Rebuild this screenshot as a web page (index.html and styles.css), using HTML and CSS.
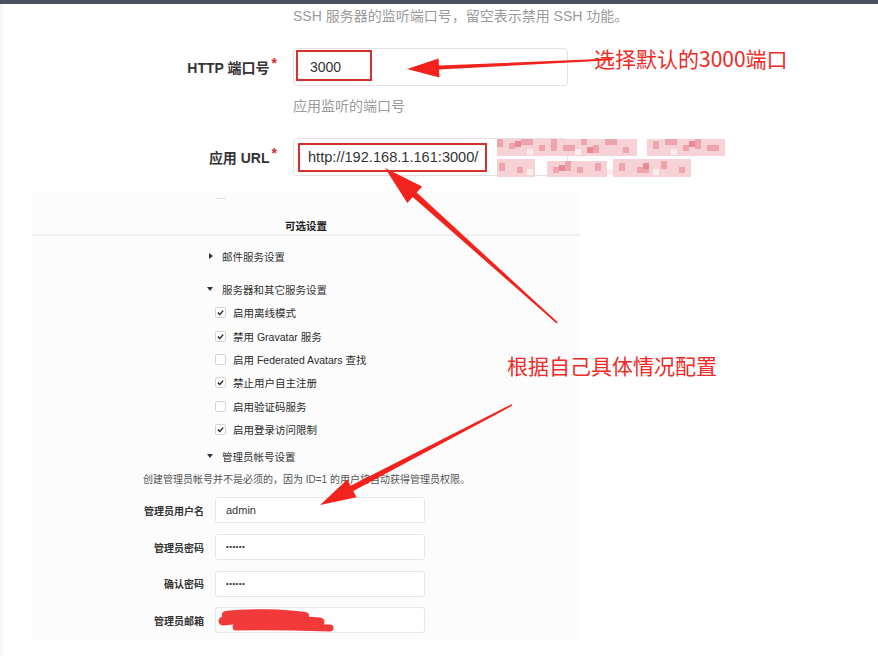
FILE: index.html
```html
<!DOCTYPE html>
<html lang="zh-CN">
<head>
<meta charset="utf-8">
<title>Gitea 安装</title>
<link rel="stylesheet" href="styles.css">
</head>
<body>
<div class="topbar"></div>
<main class="page">
  <section class="form">
    <p class="hint hint-top">SSH 服务器的监听端口号，留空表示禁用 SSH 功能。</p>
    <div class="row row-http">
      <label class="lbl">HTTP 端口号<span class="req">*</span></label>
      <div class="field">
        <div class="input">3000</div>
        <span class="mark mark-port"></span>
      </div>
    </div>
    <p class="hint hint-mid">应用监听的端口号</p>
    <div class="row row-url">
      <label class="lbl">应用 URL<span class="req">*</span></label>
      <div class="field">
        <div class="input input-url">http://192.168.1.161:3000/</div>
        <span class="mark mark-url"></span>
      </div>
    </div>
  </section>

  <section class="panel">
    <div class="dash"></div>
    <h3 class="panel-title">可选设置</h3>
    <div class="group">
      <div class="toggle"><span class="tri tri-right"></span>邮件服务设置</div>
      <div class="toggle toggle-server"><span class="tri tri-down"></span>服务器和其它服务设置</div>
      <ul class="checks">
        <li><span class="cb on"><svg viewBox="0 0 11 11"><polyline points="2.3,5.6 4.5,7.8 8.8,3.2"/></svg></span>启用离线模式</li>
        <li><span class="cb on"><svg viewBox="0 0 11 11"><polyline points="2.3,5.6 4.5,7.8 8.8,3.2"/></svg></span>禁用 Gravatar 服务</li>
        <li><span class="cb"></span>启用 Federated Avatars 查找</li>
        <li><span class="cb on"><svg viewBox="0 0 11 11"><polyline points="2.3,5.6 4.5,7.8 8.8,3.2"/></svg></span>禁止用户自主注册</li>
        <li><span class="cb"></span>启用验证码服务</li>
        <li><span class="cb on"><svg viewBox="0 0 11 11"><polyline points="2.3,5.6 4.5,7.8 8.8,3.2"/></svg></span>启用登录访问限制</li>
      </ul>
      <div class="toggle toggle-admin"><span class="tri tri-down"></span>管理员帐号设置</div>
    </div>
    <p class="desc">创建管理员帐号并不是必须的，因为 ID=1 的用户将自动获得管理员权限。</p>
    <div class="admin">
      <label class="alabel">管理员用户名</label><div class="ainput">admin</div>
      <label class="alabel">管理员密码</label><div class="ainput dots">••••••</div>
      <label class="alabel">确认密码</label><div class="ainput dots">••••••</div>
      <label class="alabel">管理员邮箱</label><div class="ainput"></div>
    </div>
  </section>
</main>

<svg class="blur" viewBox="0 0 228 42" width="228" height="42">
  <g fill="#f6d2d6">
    <rect x="0" y="2" width="140" height="17"/>
    <rect x="150" y="2" width="78" height="17"/>
    <rect x="0" y="22" width="38" height="18"/>
    <rect x="50" y="24" width="60" height="16"/>
    <rect x="116" y="22" width="78" height="18"/>
  </g>
  <g fill="#eea4ad">
    <rect x="0" y="2" width="6" height="8"/><rect x="12" y="6" width="6" height="6"/>
    <rect x="24" y="2" width="12" height="6"/><rect x="42" y="8" width="6" height="6"/>
    <rect x="54" y="2" width="6" height="12"/><rect x="66" y="8" width="12" height="6"/>
    <rect x="84" y="2" width="6" height="6"/><rect x="96" y="8" width="6" height="8"/>
    <rect x="108" y="2" width="12" height="6"/><rect x="126" y="10" width="6" height="6"/>
    <rect x="156" y="4" width="6" height="8"/><rect x="168" y="2" width="12" height="6"/>
    <rect x="186" y="8" width="6" height="6"/><rect x="198" y="2" width="6" height="10"/>
    <rect x="210" y="8" width="12" height="6"/>
    <rect x="2" y="26" width="6" height="8"/><rect x="20" y="30" width="6" height="6"/>
    <rect x="56" y="30" width="6" height="6"/><rect x="68" y="24" width="6" height="10"/>
    <rect x="80" y="30" width="6" height="6"/><rect x="98" y="26" width="6" height="8"/>
    <rect x="122" y="26" width="6" height="8"/><rect x="140" y="30" width="12" height="6"/>
    <rect x="164" y="24" width="6" height="8"/><rect x="182" y="30" width="6" height="6"/>
  </g>
  <g fill="#e88a95">
    <rect x="18" y="4" width="6" height="6"/><rect x="90" y="10" width="6" height="6"/>
    <rect x="192" y="4" width="6" height="6"/><rect x="62" y="28" width="6" height="6"/>
    <rect x="146" y="26" width="6" height="6"/>
  </g>
  <g fill="#fbecee">
    <rect x="30" y="12" width="6" height="6"/><rect x="78" y="12" width="6" height="6"/>
    <rect x="174" y="12" width="6" height="6"/><rect x="30" y="32" width="6" height="6"/>
    <rect x="110" y="32" width="6" height="6"/><rect x="156" y="32" width="6" height="6"/>
  </g>
</svg>

<svg class="annot" viewBox="0 0 878 656" width="878" height="656">
  <g fill="#f2231d">
    <polygon points="407,69 438.6,58.5 438.9,65.5 612,58.6 612,60.2 439.1,69.5 439.4,77.5"/>
    <polygon points="385,168 422.1,186.6 416.7,192.6 557.8,322.2 556.6,323.4 412.7,197.0 407.3,203.0"/>
    <polygon points="320,505 347.3,479.5 350.5,485.7 511.7,404.2 512.4,405.6 353.3,491.1 356.5,497.3"/>
  </g>
  <g fill="none" stroke="#f23a3a" stroke-linecap="round">
    <path d="M226,615 C250,612 285,613 305,616" stroke-width="8"/>
    <path d="M223,621 C255,618 290,620 320,622" stroke-width="9"/>
    <path d="M236,627 C265,626 300,627 330,628" stroke-width="7"/>
  </g>
</svg>

<p class="note note-port">选择默认的3000端口</p>
<p class="note note-cfg">根据自己具体情况配置</p>
</body>
</html>
```

FILE: styles.css
```css
html, body {
  margin: 0;
  padding: 0;
}
body {
  position: relative;
  width: 878px;
  height: 656px;
  overflow: hidden;
  background: #ffffff;
  color: #333333;
  font-family: "Liberation Sans", "Noto Sans CJK SC", sans-serif;
  box-shadow: inset 3px 0 0 #f5f5f5;
}
.topbar {
  height: 4px;
  background: #4a525e;
}
.page {
  display: flex;
  flex-direction: column;
}

/* ---- top form ---- */
.form {
  display: flex;
  flex-direction: column;
}
.hint {
  margin: 0 0 0 293px;
  font-size: 14px;
  line-height: 20px;
  color: #9a9a9a;
}
.hint-top { margin-top: 2px; }
.hint-mid { margin-top: 10px; }
.row {
  display: flex;
  align-items: center;
}
.row-http { margin-top: 22px; }
.row-url { margin-top: 22px; }
.lbl {
  width: 277px;
  margin-right: 16px;
  text-align: right;
  font-size: 14px;
  font-weight: bold;
  color: #333;
}
.req {
  color: #db2828;
  margin-left: 2px;
  position: relative;
  top: -5px;
  font-weight: bold;
}
.field {
  position: relative;
}
.input {
  box-sizing: border-box;
  width: 275px;
  height: 38px;
  border: 1px solid #e2e2e2;
  border-radius: 4px;
  padding-left: 16px;
  line-height: 36px;
  font-size: 14px;
  color: #333;
  background: #fff;
}
.input-url {
  padding-left: 14px;
  font-size: 14.6px;
}
.mark {
  position: absolute;
  box-sizing: border-box;
  border: 2px solid #d7302e;
}
.mark-port {
  left: 3px;
  top: 2px;
  width: 76px;
  height: 31px;
}
.mark-url {
  left: 5px;
  top: 5px;
  width: 189px;
  height: 29px;
}

/* ---- optional settings panel ---- */
.panel {
  margin-top: 16px;
  margin-left: 32px;
  width: 548px;
  height: 448px;
  background: #fcfcfc;
  display: flex;
  flex-direction: column;
}
.dash {
  margin: 6px 0 0 184px;
  width: 10px;
  height: 1px;
  background: #e2e2e2;
}
.panel-title {
  margin: 19px 0 0;
  height: 16px;
  line-height: 16px;
  text-align: center;
  font-size: 10.5px;
  font-weight: bold;
  color: #222;
  border-bottom: 2px solid #efefef;
}
.group {
  padding-left: 177px;
  display: flex;
  flex-direction: column;
}
.toggle {
  display: flex;
  align-items: center;
  height: 16px;
  font-size: 10.5px;
  color: #333;
  margin-top: 12px;
}
.toggle-server { margin-top: 17px; }
.toggle-admin { margin-top: 7px; }
.tri {
  width: 0;
  height: 0;
}
.tri-right {
  border-top: 3px solid transparent;
  border-bottom: 3px solid transparent;
  border-left: 4px solid #333;
  margin-right: 9px;
}
.tri-down {
  margin-left: -2px;
  border-left: 3px solid transparent;
  border-right: 3px solid transparent;
  border-top: 4px solid #333;
  margin-right: 9px;
}
.checks {
  list-style: none;
  margin: 4px 0 0;
  padding: 0 0 0 6px;
}
.checks li {
  display: flex;
  align-items: center;
  height: 23.4px;
  font-size: 10.5px;
  color: #2a2a2a;
}
.cb {
  box-sizing: border-box;
  width: 11px;
  height: 11px;
  border: 1px solid #d4d4d4;
  border-radius: 2px;
  background: #fff;
  margin-right: 7px;
  display: flex;
}
.cb svg {
  width: 9px;
  height: 9px;
}
.cb polyline {
  fill: none;
  stroke: #1f1f1f;
  stroke-width: 1.7;
}
.desc {
  margin: 8px 0 0 111px;
  font-size: 10px;
  line-height: 16px;
  color: #555;
}
.admin {
  margin-top: 9px;
  display: grid;
  grid-template-columns: 172px 210px;
  grid-auto-rows: 26px;
  column-gap: 11px;
  row-gap: 10.7px;
  align-items: center;
}
.alabel {
  text-align: right;
  font-size: 10px;
  font-weight: bold;
  color: #333;
}
.ainput {
  box-sizing: border-box;
  height: 26px;
  border: 1px solid #e6e6e6;
  border-radius: 3px;
  background: #fff;
  padding-left: 10px;
  line-height: 24px;
  font-size: 11px;
  color: #333;
}
.dots {
  font-size: 8px;
  letter-spacing: 0.4px;
}

/* ---- annotation overlays ---- */
.blur {
  position: absolute;
  left: 497px;
  top: 137px;
}
.annot {
  position: absolute;
  left: 0;
  top: 0;
  pointer-events: none;
}
.note {
  position: absolute;
  margin: 0;
  font-family: "Noto Sans CJK SC", sans-serif;
  font-weight: normal;
  font-size: 21px;
  line-height: 24px;
  color: #ee2b26;
  white-space: nowrap;
}
.note-port {
  left: 594px;
  top: 46px;
}
.note-cfg {
  left: 507px;
  top: 353px;
}
```
